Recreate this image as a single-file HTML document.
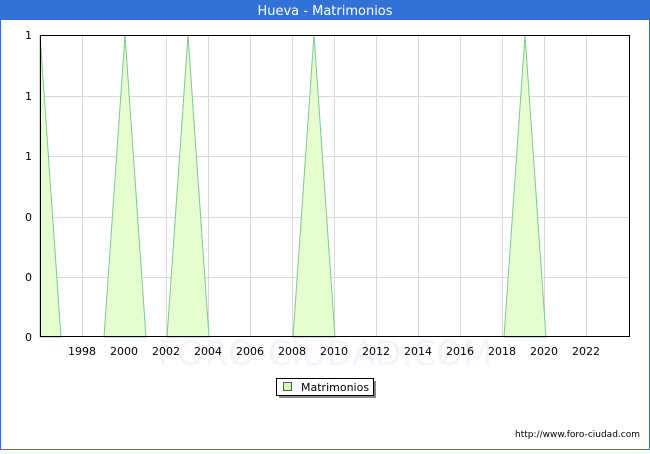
<!DOCTYPE html>
<html><head><meta charset="utf-8"><style>
body{margin:0;width:650px;height:450px;overflow:hidden;font-family:"DejaVu Sans","Liberation Sans",sans-serif;}
</style></head><body>
<svg width="650" height="450" xmlns="http://www.w3.org/2000/svg" font-family="DejaVu Sans, Liberation Sans, sans-serif">
<rect x="0" y="0" width="650" height="450" fill="#3272d6"/>
<rect x="1" y="20" width="648" height="429" fill="#fff"/>
<text x="325" y="15" fill="#fff" font-size="13" text-anchor="middle">Hueva - Matrimonios</text>
<g stroke="#d8d8d8" stroke-width="1">
<line x1="40" y1="96.5" x2="630" y2="96.5"/><line x1="40" y1="156.5" x2="630" y2="156.5"/>
<line x1="40" y1="217.5" x2="630" y2="217.5"/><line x1="40" y1="277.5" x2="630" y2="277.5"/>
<line x1="82.5" y1="35" x2="82.5" y2="337"/><line x1="124.5" y1="35" x2="124.5" y2="337"/>
<line x1="166.5" y1="35" x2="166.5" y2="337"/><line x1="208.5" y1="35" x2="208.5" y2="337"/>
<line x1="250.5" y1="35" x2="250.5" y2="337"/><line x1="292.5" y1="35" x2="292.5" y2="337"/>
<line x1="334.5" y1="35" x2="334.5" y2="337"/><line x1="376.5" y1="35" x2="376.5" y2="337"/>
<line x1="418.5" y1="35" x2="418.5" y2="337"/><line x1="460.5" y1="35" x2="460.5" y2="337"/>
<line x1="502.5" y1="35" x2="502.5" y2="337"/><line x1="544.5" y1="35" x2="544.5" y2="337"/>
<line x1="586.5" y1="35" x2="586.5" y2="337"/>
</g>
<text x="325" y="365" fill="#f3f4fb" font-size="34" text-anchor="middle">FORO-CIUDAD.COM</text>
<g fill="#e6fdd0" stroke="#7ec894" stroke-width="1">
<polygon points="40,35 61,337 40,337"/>
<polygon points="104,337 125,35 146,337"/>
<polygon points="167,337 188,35 209,337"/>
<polygon points="293,337 314,35 335,337"/>
<polygon points="504,337 525,35 546,337"/>
</g>
<rect x="40.5" y="35.5" width="589" height="301" fill="none" stroke="#000" stroke-width="1"/>
<g font-size="11" fill="#000" text-anchor="end">
<text x="32" y="39">1</text><text x="32" y="100">1</text><text x="32" y="160">1</text>
<text x="32" y="221">0</text><text x="32" y="281">0</text><text x="32" y="341">0</text>
</g>
<g font-size="11" fill="#000" text-anchor="middle">
<text x="82" y="355">1998</text><text x="124" y="355">2000</text><text x="166" y="355">2002</text>
<text x="208" y="355">2004</text><text x="250" y="355">2006</text><text x="292" y="355">2008</text>
<text x="334" y="355">2010</text><text x="376" y="355">2012</text><text x="418" y="355">2014</text>
<text x="460" y="355">2016</text><text x="502" y="355">2018</text><text x="544" y="355">2020</text>
<text x="586" y="355">2022</text>
</g>
<rect x="279" y="381" width="97" height="17" fill="#888"/>
<rect x="276.5" y="378.5" width="97" height="17" fill="#fff" stroke="#000"/>
<rect x="283.5" y="382.5" width="8" height="8" fill="#d8f8b8" stroke="#555"/>
<text x="301" y="391" font-size="11">Matrimonios</text>
<text x="640" y="437" font-size="9" text-anchor="end">http://www.foro-ciudad.com</text>
</svg>
</body></html>
